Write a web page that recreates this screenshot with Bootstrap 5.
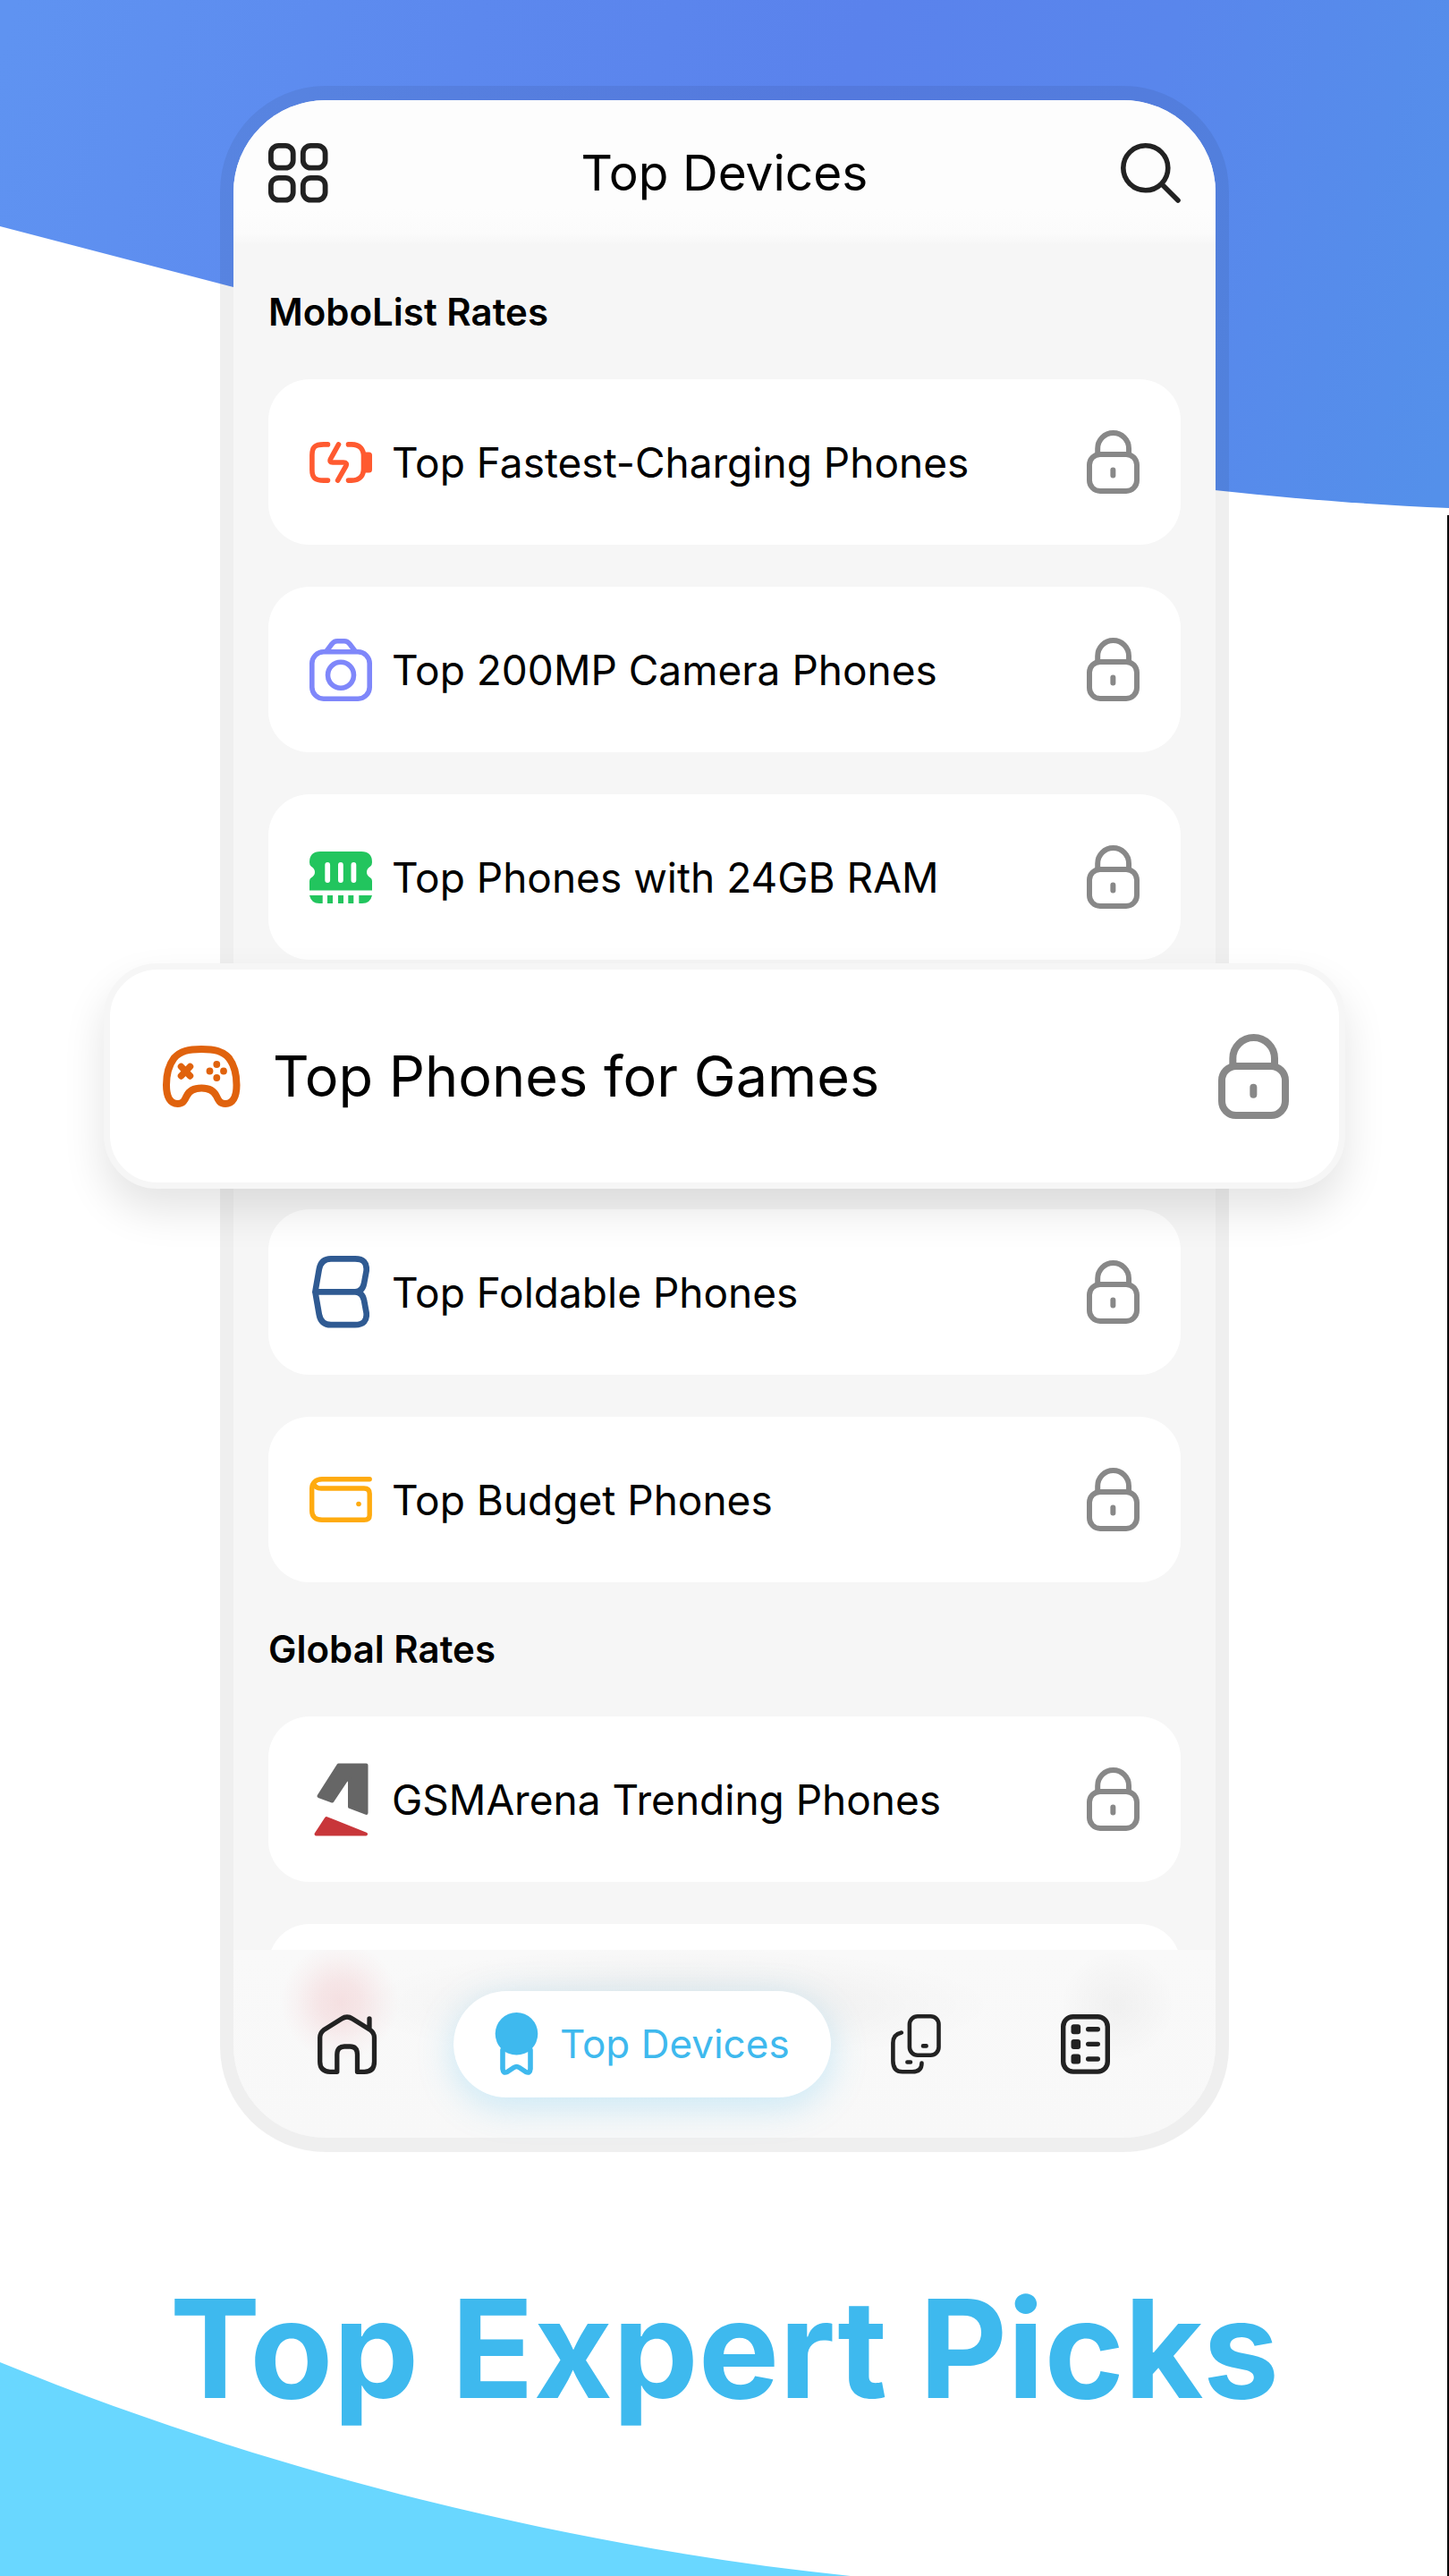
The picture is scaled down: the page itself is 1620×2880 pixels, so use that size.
<!DOCTYPE html>
<html lang="en">
<head>
<meta charset="utf-8">
<meta name="viewport" content="width=device-width, initial-scale=1">
<title>MoboList – Top Devices</title>
<link href="https://cdn.jsdelivr.net/npm/bootstrap@5.3.0/dist/css/bootstrap.min.css" rel="stylesheet">
<style>
  :root { --ink: #222; --sky: #3eb9ee; --panel: #f6f6f6; --lock: #888; }
  body { font-family: Inter, "Open Sans", sans-serif; background: #fff; color: #000; }
  a { color: inherit; text-decoration: none; }
  svg { display: block; flex: none; }
  .line-art { fill: none; stroke: currentColor; stroke-linecap: round; stroke-linejoin: round; }

  .scene { isolation: isolate; padding-top: 96px; }
  .wave-top { top: 0; left: 0; height: 568px; z-index: -1; }
  .wave-bottom { bottom: 0; left: 0; width: 58.7%; height: 239px; z-index: -1; }
  .edge-line { top: 576px; right: 0; bottom: 0; width: 2px; background: #000; }

  .phone { max-width: 1128px; border-radius: 118px; background: rgba(0,0,0,.063); padding: 16px 15px; }
  .phone-screen { border-radius: 103px; background: var(--panel); }
  .app-bar { height: 162px; padding: 0 39px; border-radius: 103px 103px 0 0; background: linear-gradient(#fdfdfd 0, #fdfdfd 75%, #fbfbfb 92%, var(--panel) 100%); color: var(--ink); }
  .app-bar h1 { font-size: 55px; line-height: 64px; font-weight: 400; color: #000; }
  .icon-btn { background: none; border: 0; padding: 0; color: var(--ink); }

  .feed { padding: 0 39px; }
  .feed h2 { height: 150px; font-size: 42px; line-height: 150px; font-weight: 600; margin: 0; }
  .rate-list { display: flex; flex-direction: column; gap: 47px; }
  .rate-row { height: 185px; padding: 0 46px; gap: 22px; border-radius: 46px; background: #fff; font-size: 46px; line-height: 52px; }
  .rate-icon { width: 70px; display: flex; justify-content: center; }
  .lock { color: var(--lock); margin-left: auto; width: 59px; height: 71px; }

  .popout { position: relative; z-index: 2; margin: -43px -184px -24px; }
  .popout .rate-row { height: 252px; padding: 0 56px 0 59px; gap: 36px; border: 7px solid var(--panel); border-radius: 60px; font-size: 63px; line-height: 70px; box-shadow: 0 24px 48px rgba(0,0,0,.11); }
  .popout .rate-icon { width: 87px; }
  .popout .lock { width: 79px; height: 95px; }

  .tab-bar { position: relative; height: 210px; margin-top: -156px; padding: 0 48px 0 32px; border-radius: 0 0 103px 103px; color: var(--ink);
    background:
      radial-gradient(ellipse 66px 66px at 119px 58px, rgba(225,100,110,.17), rgba(225,100,110,.13) 35%, rgba(225,100,110,.04) 75%, transparent),
      radial-gradient(ellipse 360px 66px at 45% 62px, rgba(0,0,0,.05), rgba(0,0,0,.035) 40%, rgba(0,0,0,.01) 75%, transparent),
      radial-gradient(ellipse 64px 62px at 90% 62px, rgba(0,0,0,.035), rgba(0,0,0,.01) 70%, transparent),
      linear-gradient(#f9f9f9, #f8f8f8); }
  .tab-link { width: 190px; height: 119px; display: flex; align-items: center; justify-content: center; }
  .tab-active { height: 119px; padding: 0 46px; gap: 24px; border-radius: 60px; background: #fff; color: var(--sky); font-size: 44px; line-height: 50px; white-space: nowrap; box-shadow: 0 10px 40px rgba(62,185,238,.26); }

  .tagline { margin: 131px 0 0; font-size: 152px; line-height: 178px; font-weight: 700; color: var(--sky); }
</style>
<script src="https://cdn.jsdelivr.net/npm/bootstrap@5.3.0/dist/js/bootstrap.bundle.min.js"></script>
</head>
<body>
<svg class="d-none" aria-hidden="true">
  <symbol id="lock" viewBox="0 0 237 285">
    <g fill="none" stroke="currentColor" stroke-width="24">
      <rect x="12" y="108" width="213" height="165" rx="48"/>
      <path d="M49 106V82a70 70 0 0 1 140 0v24"/>
    </g>
    <rect x="106" y="167" width="24" height="48" rx="12" fill="currentColor"/>
  </symbol>
</svg>

<div class="scene position-relative min-vh-100 overflow-hidden">
  <svg class="wave-top position-absolute w-100" viewBox="0 0 1620 568" preserveAspectRatio="none" aria-hidden="true">
    <defs>
      <linearGradient id="blue" gradientUnits="userSpaceOnUse" x1="0" y1="60" x2="1620" y2="500">
        <stop offset="0" stop-color="#5f93f1"/><stop offset=".3" stop-color="#5c88ee"/>
        <stop offset=".55" stop-color="#5a82ec"/><stop offset=".75" stop-color="#5986ec"/><stop offset="1" stop-color="#5490ea"/>
      </linearGradient>
    </defs>
    <path fill="url(#blue)" d="M0 0H1620V568C1530 564 1450 558 1358 548L261 321L0 253Z"/>
  </svg>
  <svg class="wave-bottom position-absolute" viewBox="0 0 951 239" preserveAspectRatio="none" aria-hidden="true">
    <path fill="#69d7ff" d="M0 0C300 123 640 207 951 239H0Z"/>
  </svg>
  <div class="edge-line position-absolute"></div>

  <main class="phone mx-auto">
    <div class="phone-screen">
      <header class="app-bar d-flex align-items-center justify-content-between">
        <button class="icon-btn" type="button" aria-label="Menu">
          <svg width="67" height="67" viewBox="0 0 67 67" class="line-art" stroke-width="5.8">
            <rect x="2.9" y="2.9" width="24.8" height="24.8" rx="8.5"/><rect x="38.8" y="2.9" width="24.8" height="24.8" rx="8.5"/>
            <rect x="2.9" y="38.8" width="24.8" height="24.8" rx="8.5"/><rect x="38.8" y="38.8" width="24.8" height="24.8" rx="8.5"/>
          </svg>
        </button>
        <h1 class="m-0">Top Devices</h1>
        <button class="icon-btn" type="button" aria-label="Search">
          <svg width="67" height="67" viewBox="0 0 67 67" class="line-art" stroke-width="5.6">
            <circle cx="27.8" cy="27.8" r="25"/><path d="M46 46L64 64"/>
          </svg>
        </button>
      </header>

      <div class="feed">
        <h2>MoboList Rates</h2>
        <ul class="rate-list list-unstyled m-0">
          <li><a href="#" class="rate-row d-flex align-items-center">
            <span class="rate-icon"><svg width="70" height="46" viewBox="0 0 70 46" class="line-art" color="#ff5a30" stroke-width="5.6">
              <path d="M20.5 2.9H16C6 2.9 2.9 6 2.9 15V31C2.9 40 6 43.1 16 43.1H20.5M32.5 2.9L23.6 19Q21.8 23 26 23H38Q42.6 23 40.8 27L31.6 43.1M43.5 2.9H47C57 2.9 60.5 9 60.5 16V30C60.5 37 57 43.1 47 43.1H43.5"/>
              <rect x="59" y="11.4" width="11" height="23.2" rx="3.5" fill="currentColor" stroke="none"/>
            </svg></span>
            <span>Top Fastest-Charging Phones</span>
            <svg class="lock" role="img" aria-label="Locked"><use href="#lock"/></svg>
          </a></li>
          <li><a href="#" class="rate-row d-flex align-items-center">
            <span class="rate-icon"><svg width="70" height="70" viewBox="0 0 70 70" class="line-art" color="#7f87fa" stroke-width="5.6">
              <rect x="2.8" y="14.8" width="64.4" height="52.4" rx="13"/>
              <path d="M19 14L25 6Q27.5 2.8 31 2.8H39Q42.5 2.8 45 6L51 14"/><circle cx="35" cy="40.8" r="14.5"/>
            </svg></span>
            <span>Top 200MP Camera Phones</span>
            <svg class="lock" role="img" aria-label="Locked"><use href="#lock"/></svg>
          </a></li>
          <li><a href="#" class="rate-row d-flex align-items-center">
            <span class="rate-icon"><svg width="70" height="58" viewBox="0 0 70 58" fill="#22c55e">
              <path fill-rule="evenodd" d="M12 0H58Q70 0 70 12Q70 15.5 68 16.7Q64 19 64 23Q64 27 68 29.3Q70 30.5 70 33V43.5H0V33Q0 30.5 2 29.3Q6 27 6 23Q6 19 2 16.7Q0 15.5 0 12Q0 0 12 0ZM20.2 12a2.9 2.9 0 0 0-2.9 2.9V32a2.9 2.9 0 0 0 5.8 0V14.9A2.9 2.9 0 0 0 20.2 12ZM34.9 12a2.9 2.9 0 0 0-2.9 2.9V32a2.9 2.9 0 0 0 5.8 0V14.9A2.9 2.9 0 0 0 34.9 12ZM49.4 12a2.9 2.9 0 0 0-2.9 2.9V32a2.9 2.9 0 0 0 5.8 0V14.9A2.9 2.9 0 0 0 49.4 12Z"/>
              <path d="M0 49H14.7V58H11Q2 58 0 49ZM20 49h6v9h-6ZM32 49h6v9h-6ZM43.3 49h6v9h-6ZM55.3 49H70Q68 58 59 58H55.3Z"/>
            </svg></span>
            <span>Top Phones with 24GB RAM</span>
            <svg class="lock" role="img" aria-label="Locked"><use href="#lock"/></svg>
          </a></li>
          <li class="popout"><a href="#" class="rate-row d-flex align-items-center">
            <span class="rate-icon"><svg width="87" height="69" viewBox="0 0 87 69" class="line-art" color="#e0620d" stroke-width="8">
              <path d="M43.3 4C58 4 67 6 74 14C80 22 82.5 32 82.5 44C82.5 58 78 65 70 65C64 65 62 61 60 56.5C57 50 52 47.5 43.3 47.5C34.6 47.5 29.6 50 26.6 56.5C24.6 61 22.6 65 16.6 65C8.6 65 4 58 4 44C4 32 6.6 22 12.6 14C19.6 6 28.6 4 43.3 4Z"/>
              <path stroke-width="7.5" d="M20.5 23.5l10 10.4M30.5 23.5l-10 10.4"/>
              <g fill="currentColor" stroke="none"><circle cx="60.3" cy="21" r="3.9"/><circle cx="52.5" cy="28.5" r="3.9"/><circle cx="68" cy="28.5" r="3.9"/><circle cx="60.3" cy="36" r="3.9"/></g>
            </svg></span>
            <span>Top Phones for Games</span>
            <svg class="lock" role="img" aria-label="Locked"><use href="#lock"/></svg>
          </a></li>
          <li><a href="#" class="rate-row d-flex align-items-center">
            <span class="rate-icon"><svg width="64" height="81" viewBox="0 0 64 81" class="line-art" color="#2f5a92" stroke-width="6.7">
              <path d="M3.4 40.3L7.8 15Q10 3.4 21 3.4H48Q62 3.4 60.6 17L58 31Q56 40.3 48 40.3H3.4L7.8 65.6Q10 77.2 21 77.2H48Q62 77.2 60.6 63.6L58 49.6Q56 40.3 48 40.3"/>
            </svg></span>
            <span>Top Foldable Phones</span>
            <svg class="lock" role="img" aria-label="Locked"><use href="#lock"/></svg>
          </a></li>
          <li><a href="#" class="rate-row d-flex align-items-center">
            <span class="rate-icon"><svg width="70" height="51" viewBox="0 0 70 51" class="line-art" color="#ffab0f" stroke-width="5.4">
              <path d="M67.2 2.7H14C7 2.7 2.7 7 2.7 13V38C2.7 45 7 48.3 14 48.3H61Q67.2 48.3 67.2 43V19Q67.2 13 61 13H13C8 13 6 11 5 8"/>
              <circle cx="55" cy="30.5" r="2.8" fill="currentColor" stroke="none"/>
            </svg></span>
            <span>Top Budget Phones</span>
            <svg class="lock" role="img" aria-label="Locked"><use href="#lock"/></svg>
          </a></li>
        </ul>

        <h2>Global Rates</h2>
        <ul class="rate-list list-unstyled m-0">
          <li><a href="#" class="rate-row d-flex align-items-center">
            <span class="rate-icon"><svg width="61" height="82" viewBox="0 0 61 82" stroke-width="4" stroke-linejoin="round">
              <path fill="#666" stroke="#666" d="M27.5 2.5H58.5V56L40 49V18Q38 17 35.5 20L20.5 42.5L5.5 37Z"/>
              <path fill="#c8363a" stroke="#c8363a" d="M14 62L58 79.5H2.5Z"/>
            </svg></span>
            <span>GSMArena Trending Phones</span>
            <svg class="lock" role="img" aria-label="Locked"><use href="#lock"/></svg>
          </a></li>
          <li aria-hidden="true"><div class="rate-row"></div></li>
        </ul>
      </div>

      <nav class="tab-bar d-flex align-items-center" aria-label="Main">
        <a href="#" class="tab-link" aria-label="Home">
          <svg width="67" height="67" viewBox="0 0 67 67" class="line-art" stroke-width="5.3">
            <path d="M21.8 64.3H14Q2.7 64.3 2.7 53V26Q2.7 21 7 17.5L27 5Q33 1 39 5L59 17.5Q63.5 21 63.5 26V53Q63.5 64.3 52.5 64.3H44.5V45Q44.5 36 36.5 36H30Q21.8 36 21.8 45ZM58 5V16"/>
          </svg>
        </a>
        <a href="#" class="tab-active d-flex align-items-center ms-4" aria-current="page">
          <svg width="49" height="70" viewBox="0 0 49 70" class="line-art" stroke-width="5.6">
            <circle cx="24.5" cy="23.8" r="23.8" fill="currentColor" stroke="none"/>
            <path d="M9 42V63Q9.5 68.5 14 66.5L21.5 61.5Q24.5 59.5 27.5 61.5L35 66.5Q39.5 68.5 40 63V42"/>
          </svg>
          <span>Top Devices</span>
        </a>
        <a href="#" class="tab-link" aria-label="Compare phones">
          <svg width="56" height="67" viewBox="0 0 56 67" class="line-art" stroke-width="4.6">
            <rect x="20.9" y="2.3" width="32.6" height="43.5" rx="9"/>
            <path d="M11.8 20.5Q2.4 22.5 2.4 32V52Q2.4 64.3 13 64.3H24Q34.5 64.3 34.5 54.5M36 35.4h3.6M18.4 53.5h3.6"/>
          </svg>
        </a>
        <a href="#" class="tab-link" aria-label="Lists">
          <svg width="55" height="67" viewBox="0 0 55 67" class="line-art" stroke-width="5.4">
            <rect x="2.7" y="2.7" width="49.6" height="61.4" rx="11"/>
            <g fill="currentColor" stroke="none"><rect x="11.5" y="11.2" width="10.6" height="11" rx="3"/><rect x="11.5" y="27.9" width="10.6" height="11" rx="3"/><rect x="11.5" y="44.5" width="10.6" height="11" rx="3"/></g>
            <path d="M30.7 16.7h10.6M30.7 33.4h10.6M30.7 50h10.6"/>
          </svg>
        </a>
      </nav>
    </div>
  </main>

  <p class="tagline text-center">Top Expert Picks</p>
</div>
</body>
</html>
